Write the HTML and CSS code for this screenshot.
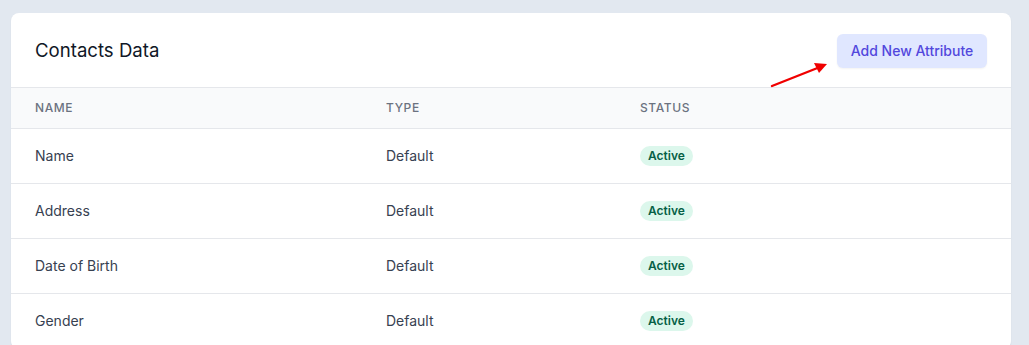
FILE: index.html
```html
<!DOCTYPE html>
<html>
<head>
<meta charset="utf-8">
<link rel="stylesheet" href="styles.css">
</head>
<body>
<div class="card">
  <div class="card-header">
    <h2 class="title">Contacts Data</h2>
    <button class="btn-add">Add New Attribute</button>
    <svg class="arrow" width="70" height="40" viewBox="0 0 70 40">
      <line x1="8" y1="33" x2="56" y2="14" stroke="#f00000" stroke-width="2.4" stroke-linecap="round"/>
      <polygon points="63,11 50,10 55,20" fill="#f00000"/>
    </svg>
  </div>
  <div class="table">
    <div class="row head">
      <div class="cell">Name</div>
      <div class="cell">Type</div>
      <div class="cell">Status</div>
    </div>
    <div class="row">
      <div class="cell">Name</div>
      <div class="cell">Default</div>
      <div class="cell"><span class="badge">Active</span></div>
    </div>
    <div class="row">
      <div class="cell">Address</div>
      <div class="cell">Default</div>
      <div class="cell"><span class="badge">Active</span></div>
    </div>
    <div class="row">
      <div class="cell">Date of Birth</div>
      <div class="cell">Default</div>
      <div class="cell"><span class="badge">Active</span></div>
    </div>
    <div class="row">
      <div class="cell">Gender</div>
      <div class="cell">Default</div>
      <div class="cell"><span class="badge">Active</span></div>
    </div>
  </div>
</div>
</body>
</html>
```
FILE: styles.css
```css
html, body {
  margin: 0;
  padding: 0;
}
body {
  background: #e2e8f0;
  font-family: Inter, "Noto Sans", sans-serif;
  color: #374151;
  padding: 13px 18px 0 11px;
  height: 345px;
  box-sizing: border-box;
  overflow: hidden;
}
.card {
  width: 1000px;
  background: #fff;
  border-radius: 8px;
  box-shadow: 0 1px 2px rgba(15, 23, 42, 0.06);
}
.card-header {
  position: relative;
  height: 74px;
  display: flex;
  align-items: center;
  justify-content: space-between;
  padding: 0 24px;
  border-bottom: 1px solid #e5e7eb;
}
.title {
  margin: 0;
  font-size: 18.6px;
  font-weight: 400;
  color: #111827;
  margin-top: -1px;
}
.btn-add {
  height: 34px;
  width: 150px;
  border: none;
  border-radius: 6px;
  background: #e0e7ff;
  color: #5247dd;
  font-family: Inter, "Noto Sans", sans-serif;
  font-size: 14px;
  font-weight: 500;
  box-shadow: 0 1px 2px rgba(0, 0, 0, 0.05);
  margin-top: 1px;
}
.arrow {
  position: absolute;
  left: 753px;
  top: 40px;
}
.row {
  display: grid;
  grid-template-columns: 351px 254px 1fr;
  align-items: center;
  height: 54px;
  border-bottom: 1px solid #e5e7eb;
  font-size: 14px;
  color: #374151;
}
.row .cell {
  margin-top: -1px;
}
.row.head {
  height: 40px;
  background: #f9fafb;
  font-size: 12px;
  text-transform: uppercase;
  letter-spacing: 0.05em;
  color: #6b7280;
  font-weight: 500;
}
.cell {
  padding: 0 24px;
}
.badge {
  display: inline-block;
  padding: 2px 8px;
  border-radius: 10px;
  background: #dcf7ec;
  color: #065f46;
  font-size: 12px;
  font-weight: 600;
  line-height: 16px;
}
```
